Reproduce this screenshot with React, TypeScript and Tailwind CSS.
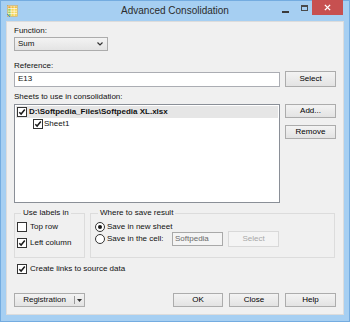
import React from "react";

// ─── Small Win8-style controls ──────────────────────────────────────────────
function Check({ checked = false }: { checked?: boolean }) {
  return (
    <span className="flex h-[10px] w-[10px] shrink-0 items-center justify-center border border-[#333] bg-white">
      {checked && (
        <svg viewBox="0 0 8 8" className="h-[8px] w-[8px]">
          <path d="M1.3 4.3 L3.1 6.1 L6.8 1.6" stroke="#1a1a1a" strokeWidth="1.5" fill="none" />
        </svg>
      )}
    </span>
  );
}

function Radio({ on = false }: { on?: boolean }) {
  return (
    <span className="flex h-[10px] w-[10px] shrink-0 items-center justify-center rounded-full border border-[#333] bg-white">
      {on && <span className="h-[4px] w-[4px] rounded-full bg-[#1a1a1a]" />}
    </span>
  );
}

function Btn({ label, w = "w-[51px]", h = "h-[14px]", disabled = false }: { label: string; w?: string; h?: string; disabled?: boolean }) {
  return (
    <button
      className={
        disabled
          ? `${w} ${h} shrink-0 border border-[#d9d9d9] bg-[#f4f4f4] text-[8px] leading-none text-[#a8a8a8]`
          : `${w} ${h} shrink-0 border border-[#acacac] bg-linear-to-b from-[#f3f3f3] to-[#e3e3e3] text-[8px] leading-none text-black`
      }
    >
      {label}
    </button>
  );
}

function AppIcon() {
  const colors = [
    ["#e8a33c", "#f0c040", "#f0c040"],
    ["#9ccc5a", "#f5d65a", "#f5d65a"],
    ["#9ccc5a", "#f5d65a", "#f5d65a"],
    ["#9ccc5a", "#f5d65a", "#f5d65a"],
  ];
  return (
    <svg viewBox="0 0 11 12" className="h-[12px] w-[11px]">
      <rect x="0.5" y="0.5" width="10" height="11" fill="#fff" stroke="#c9a24a" strokeWidth="0.6" />
      {colors.map((row, r) =>
        row.map((c, i) => <rect key={`${r}-${i}`} x={1.2 + i * 3.1} y={1.2 + r * 2.6} width="2.5" height="2" fill={c} />)
      )}
      <path d="M0 9 L3 12" stroke="#4a8ad0" strokeWidth="1" />
    </svg>
  );
}

export default function App() {
  return (
    <div className="flex h-[322px] w-[350px] flex-col border border-[#74ace0] bg-[#a6cff2] font-['Liberation_Sans',Arial,sans-serif] text-[#111]">
      {/* Title bar */}
      <div className="grid h-[20px] grid-cols-[69px_1fr_69px]">
        <div className="pl-[6px] pt-[4px]">
          <AppIcon />
        </div>
        <div className="pt-[4px] text-center text-[10px] leading-[12px] text-[#2b2b2b]">Advanced Consolidation</div>
        <div className="flex items-start pl-[2px]">
          <span className="mt-[10px] h-[2px] w-[7px] bg-[#3a3a3a]" />
          <span className="ml-[12px] mt-[4px] h-[6px] w-[7px] border border-t-2 border-[#4a4a4a]" />
          <span className="-mt-px ml-[4px] flex h-[15px] w-[31px] items-center justify-center bg-[#c75050]">
            <svg viewBox="0 0 8 8" className="h-[7px] w-[7px]">
              <path d="M1 1 L7 7 M7 1 L1 7" stroke="#fff" strokeWidth="1.6" />
            </svg>
          </span>
        </div>
      </div>

      {/* Client area */}
      <div className="mx-[5px] flex h-[294px] flex-col border border-[#dcdcdc] bg-[#f0f0f0] px-[7px] pt-[4px] text-[8px] leading-[10px]">
        <div>Function:</div>
        <div className="mt-[1px] flex h-[14px] w-[94px] items-center justify-between border border-[#acacac] bg-linear-to-b from-[#f3f3f3] to-[#e4e4e4] pl-[3px] pr-[4px]">
          <span>Sum</span>
          <svg viewBox="0 0 6 4" className="h-[4px] w-[6px]">
            <path d="M0.5 0.5 L3 3 L5.5 0.5" stroke="#333" strokeWidth="1.2" fill="none" />
          </svg>
        </div>

        <div className="mt-[10px]">Reference:</div>
        <div className="flex h-[16px] items-center gap-[5px]">
          <div className="flex h-[15px] w-[266px] items-center border border-[#abadb3] bg-white pl-[3px]">E13</div>
          <Btn label="Select" h="h-[16px]" />
        </div>

        <div className="mt-[5px]">Sheets to use in consolidation:</div>
        <div className="mt-[2px] flex gap-[5px]">
          <div className="h-[99px] w-[266px] border border-[#8a8f97] bg-white p-px">
            <div className="flex h-[12px] items-center gap-[2px] bg-[#e6e6e6] pl-px">
              <Check checked />
              <span className="font-bold">D:\Softpedia_Files\Softpedia XL.xlsx</span>
            </div>
            <div className="flex h-[12px] items-center gap-px pl-[17px]">
              <Check checked />
              <span>Sheet1</span>
            </div>
          </div>
          <div className="flex flex-col gap-[7px]">
            <Btn label="Add..." />
            <Btn label="Remove" />
          </div>
        </div>

        {/* Group boxes */}
        <div className="mt-[5px] flex gap-[5px]">
          <fieldset className="h-[50px] w-[71px] border border-[#dcdcdc] pl-[2px]">
            <legend className="ml-[4px] px-[2px] leading-[10px]">Use labels in</legend>
            <div className="mt-[4px] flex items-center gap-[3px]">
              <Check />
              <span>Top row</span>
            </div>
            <div className="mt-[6px] flex items-center gap-[3px]">
              <Check checked />
              <span>Left column</span>
            </div>
          </fieldset>
          <fieldset className="h-[50px] w-[245px] border border-[#dcdcdc] pl-[4px]">
            <legend className="ml-[3px] px-[2px] leading-[10px]">Where to save result</legend>
            <div className="mt-[4px] flex items-center gap-[2px]">
              <Radio on />
              <span>Save in new sheet</span>
            </div>
            <div className="mt-[-1px] flex h-[16px] items-center">
              <div className="flex w-[77px] items-center gap-[2px]">
                <Radio />
                <span>Save in the cell:</span>
              </div>
              <div className="flex h-[14px] w-[51px] items-center border border-[#a9a9a9] bg-[#f4f4f4] pl-[2px] text-[#6a6a6a]">
                Softpedia
              </div>
              <div className="ml-[5px]">
                <Btn label="Select" h="h-[16px]" disabled />
              </div>
            </div>
          </fieldset>
        </div>

        <div className="mt-[6px] flex items-center gap-[3px] pl-[3px]">
          <Check checked />
          <span>Create links to source data</span>
        </div>

        {/* Bottom buttons */}
        <div className="mt-[19px] flex items-center">
          <button className="flex h-[14px] w-[71px] items-center border border-[#acacac] bg-linear-to-b from-[#f3f3f3] to-[#e3e3e3] text-[8px] leading-none">
            <span className="flex-1 text-center">Registration</span>
            <span className="h-[8px] w-px bg-[#9a9a9a]" />
            <svg viewBox="0 0 5 3" className="mx-[2px] h-[3px] w-[5px]">
              <path d="M0 0 L5 0 L2.5 3 Z" fill="#333" />
            </svg>
          </button>
          <div className="ml-auto flex gap-[6px]">
            <Btn label="OK" w="w-[50px]" />
            <Btn label="Close" w="w-[50px]" />
            <Btn label="Help" />
          </div>
        </div>
      </div>
    </div>
  );
}
